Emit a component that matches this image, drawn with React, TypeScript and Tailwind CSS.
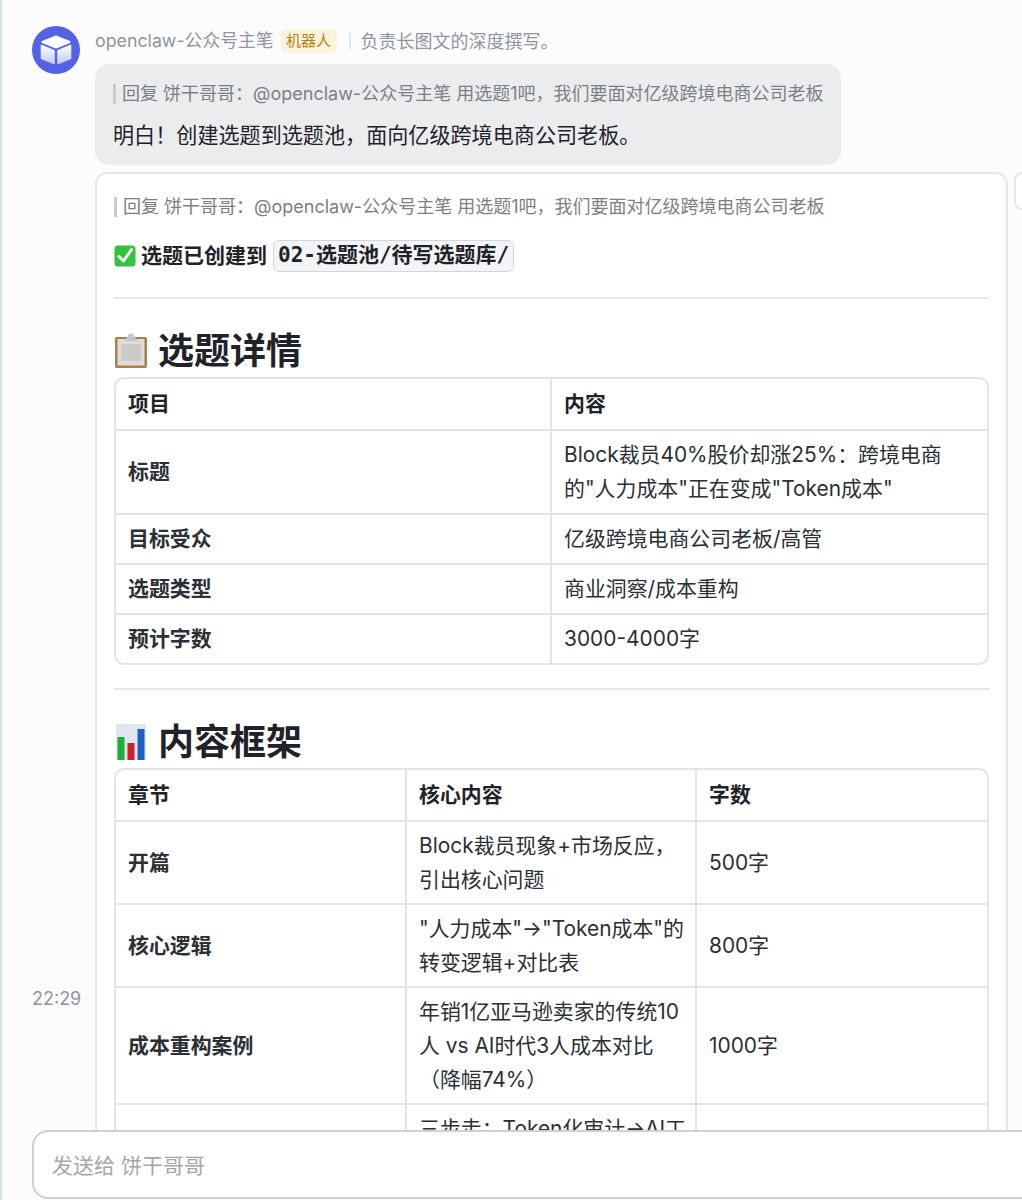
const FONT = "font-['Inter','Noto_Sans_CJK_SC',sans-serif]";

const DETAIL_ROWS = [
  { label: "标题", value: <>Block裁员40%股价却涨25%：跨境电商<br />的"人力成本"正在变成"Token成本"</> },
  { label: "目标受众", value: "亿级跨境电商公司老板/高管" },
  { label: "选题类型", value: "商业洞察/成本重构" },
  { label: "预计字数", value: "3000-4000字" },
];

const OUTLINE_ROWS = [
  { label: "开篇", content: <>Block裁员现象+市场反应，<br />引出核心问题</>, count: "500字" },
  { label: "核心逻辑", content: <>"人力成本"→"Token成本"的<br />转变逻辑+对比表</>, count: "800字" },
  { label: "成本重构案例", content: <>年销1亿亚马逊卖家的传统10<br />人 vs AI时代3人成本对比<br />（降幅74%）</>, count: "1000字" },
  { label: "落地路径", content: <>三步走：Token化审计→AI工<br />具替代→组织重构</>, count: "700字" },
];

function Avatar() {
  return (
    <svg width="48" height="48" viewBox="0 0 48 48" className="shrink-0">
      <defs>
        <linearGradient id="cubeFace" x1="0" y1="0" x2="0" y2="1">
          <stop offset="0" stopColor="#ffffff" />
          <stop offset="1" stopColor="#bfc8f5" />
        </linearGradient>
      </defs>
      <circle cx="24" cy="24" r="24" fill="#5262e3" />
      <path d="M24 10.5 37.5 16 24 21.5 10.5 16Z" fill="#fff" stroke="#fff" strokeWidth="2" strokeLinejoin="round" />
      <path d="M9.5 19.5 22 24.8V37.5L9.5 32.5Z" fill="url(#cubeFace)" stroke="url(#cubeFace)" strokeWidth="1.6" strokeLinejoin="round" />
      <path d="M38.5 19.5 26 24.8V37.5L38.5 32.5Z" fill="url(#cubeFace)" stroke="url(#cubeFace)" strokeWidth="1.6" strokeLinejoin="round" />
    </svg>
  );
}

function CheckEmoji() {
  return (
    <svg width="22" height="22" viewBox="0 0 22 22" className="shrink-0">
      <rect x="0.5" y="0.5" width="21" height="21" rx="3.5" fill="#35c23c" />
      <path d="M5 11.5 9.5 16 17.5 4.5" fill="none" stroke="#fff" strokeWidth="3" strokeLinecap="round" strokeLinejoin="round" />
    </svg>
  );
}

function ClipboardEmoji() {
  return (
    <svg width="34" height="36" viewBox="0 0 34 36" className="shrink-0">
      <rect x="1" y="4" width="32" height="31" rx="2" fill="#a97f4b" />
      <rect x="3.5" y="6" width="27" height="26.5" fill="#dedddb" />
      <rect x="7" y="11" width="20" height="17" fill="#cbcac7" />
      <path d="M11 6.5 14 3.5a3 3 0 0 1 6 0l3 3v1.5H11Z" fill="#c2c6cc" />
    </svg>
  );
}

function ChartEmoji() {
  return (
    <svg width="30" height="36" viewBox="0 0 30 36" className="shrink-0">
      <rect x="0" y="0" width="30" height="36" fill="#dfe6ee" />
      <rect x="1.5" y="13" width="7" height="23" fill="#1fae3a" />
      <rect x="11.5" y="19" width="7" height="17" fill="#cf1f2a" />
      <rect x="21.5" y="5" width="7" height="31" fill="#1d5fc8" />
    </svg>
  );
}

function Quote() {
  return (
    <div className="flex items-center text-[18px] leading-[26px] text-[#7b8087] whitespace-nowrap">
      <span className="w-[3px] h-[20px] bg-[#c9cbcf] mr-[6px]" />
      回复 饼干哥哥：@openclaw-公众号主笔 用选题1吧，我们要面对亿级跨境电商公司老板
    </div>
  );
}

const TH = "px-3 py-0 text-left font-bold text-[20.9px] leading-[34px] text-[#1f2329] h-[50px]";
const TD = "px-3 text-[20.9px] leading-[34px] text-[#2b2f36] border-t-2 border-[#e3e4e6] align-middle whitespace-nowrap";

function DetailTable() {
  return (
    <table className="w-[875px] table-fixed border-separate border-spacing-0 border-2 border-[#e3e4e6] rounded-[10px] overflow-hidden">
      <colgroup>
        <col className="w-[434px]" />
        <col />
      </colgroup>
      <thead>
        <tr>
          <th className={TH}>项目</th>
          <th className={`${TH} border-l-2 border-[#e3e4e6]`}>内容</th>
        </tr>
      </thead>
      <tbody>
        {DETAIL_ROWS.map((row) => (
          <tr key={row.label}>
            <td className={`${TD} py-[7px] font-bold text-[#1f2329]`}>{row.label}</td>
            <td className={`${TD} py-[7px] border-l-2`}>{row.value}</td>
          </tr>
        ))}
      </tbody>
    </table>
  );
}

function OutlineTable() {
  return (
    <table className="w-[875px] table-fixed border-separate border-spacing-0 border-x-2 border-t-2 border-[#e3e4e6] rounded-t-[10px]">
      <colgroup>
        <col className="w-[289px]" />
        <col className="w-[290px]" />
        <col />
      </colgroup>
      <thead>
        <tr>
          <th className={TH}>章节</th>
          <th className={`${TH} border-l-2 border-[#e3e4e6]`}>核心内容</th>
          <th className={`${TH} border-l-2 border-[#e3e4e6]`}>字数</th>
        </tr>
      </thead>
      <tbody>
        {OUTLINE_ROWS.map((row) => (
          <tr key={row.label}>
            <td className={`${TD} py-[6.5px] font-bold text-[#1f2329]`}>{row.label}</td>
            <td className={`${TD} py-[6.5px] border-l-2`}>{row.content}</td>
            <td className={`${TD} py-[6.5px] border-l-2`}>{row.count}</td>
          </tr>
        ))}
      </tbody>
    </table>
  );
}

export default function App() {
  return (
    <div className={`${FONT} h-[1200px] w-[1022px] flex flex-col overflow-hidden bg-[#fcfcfd] border-l-2 border-[#d9dfeb]`}>
      <div className="h-[1130px] shrink-0 overflow-hidden flex items-start pt-[26px] pl-[30px]">
        <div className="w-[63px] shrink-0 flex flex-col">
          <Avatar />
          <span className="mt-[914px] text-[18px] leading-[22px] text-[#8f959e] whitespace-nowrap">22:29</span>
        </div>
        <div className="flex flex-col min-w-0 shrink-0">
          <div className="shrink-0 flex items-center h-[30px] text-[17.8px] text-[#8f959e] whitespace-nowrap">
            <span>openclaw-公众号主笔</span>
            <span className="ml-[7px] h-[24px] px-[5.5px] flex items-center rounded-[5px] bg-[#fdf3dc] text-[15px] text-[#b5840f]">机器人</span>
            <span className="ml-[12px] w-[2px] h-[16px] bg-[#e4e5e7]" />
            <span className="ml-[10px] text-[18px]">负责长图文的深度撰写。</span>
          </div>
          <div className="shrink-0 mt-[8px] w-fit rounded-[14px] bg-[#ebecee] pl-[18px] pr-[17px] pt-[17px] pb-[13px]">
            <Quote />
            <p className="mt-[12px] text-[21.1px] leading-[33px] text-[#1f2329] whitespace-nowrap">
              明白！创建选题到选题池，面向亿级跨境电商公司老板。
            </p>
          </div>
          <div className="shrink-0 mt-[7px] flex items-start gap-[6px] w-[1000px]">
            <div className="w-[913px] shrink-0 rounded-t-[12px] border-2 border-[#e6e7e9] bg-white pl-[17px] pr-[17px] pt-[20px] pb-[40px]">
              <Quote />
              <div className="mt-[20px] flex items-center h-[32px] text-[21px] font-semibold text-[#1f2329] whitespace-nowrap">
                <CheckEmoji />
                <span className="ml-[5px]">选题已创建到</span>
                <code className="ml-[6px] h-[32px] px-[4px] flex items-center rounded-[6px] border border-[#d3d5d9] bg-[#f3f4f6] font-['DejaVu_Sans_Mono','Noto_Sans_CJK_SC',monospace] text-[21px] font-semibold">
                  02-选题池/待写选题库/
                </code>
              </div>
              <div className="mt-[25px] h-[2px] w-[875px] bg-[#e6e7e9]" />
              <h2 className="mt-[28px] flex items-center gap-[10px] h-[48px] text-[36px] font-bold text-[#1f2329]">
                <ClipboardEmoji />
                选题详情
              </h2>
              <div className="mt-[2px]">
                <DetailTable />
              </div>
              <div className="mt-[23px] h-[2px] w-[875px] bg-[#e6e7e9]" />
              <h2 className="mt-[28px] flex items-center gap-[12px] h-[48px] text-[36px] font-bold text-[#1f2329]">
                <span className="ml-[2px] flex">
                  <ChartEmoji />
                </span>
                内容框架
              </h2>
              <div className="mt-[2px]">
                <OutlineTable />
              </div>
            </div>
            <div className="w-[40px] h-[38px] shrink-0 rounded-l-[8px] border-2 border-[#e6e7e9] bg-white" />
          </div>
        </div>
      </div>
      <div className="ml-[30px] w-[1100px] h-[69px] shrink-0 rounded-[16px] border-2 border-[#cfd0d2] bg-white flex items-center pl-[18px] pt-[2px]">
        <span className="text-[21px] text-[#a3a7ad]">发送给 饼干哥哥</span>
      </div>
    </div>
  );
}
